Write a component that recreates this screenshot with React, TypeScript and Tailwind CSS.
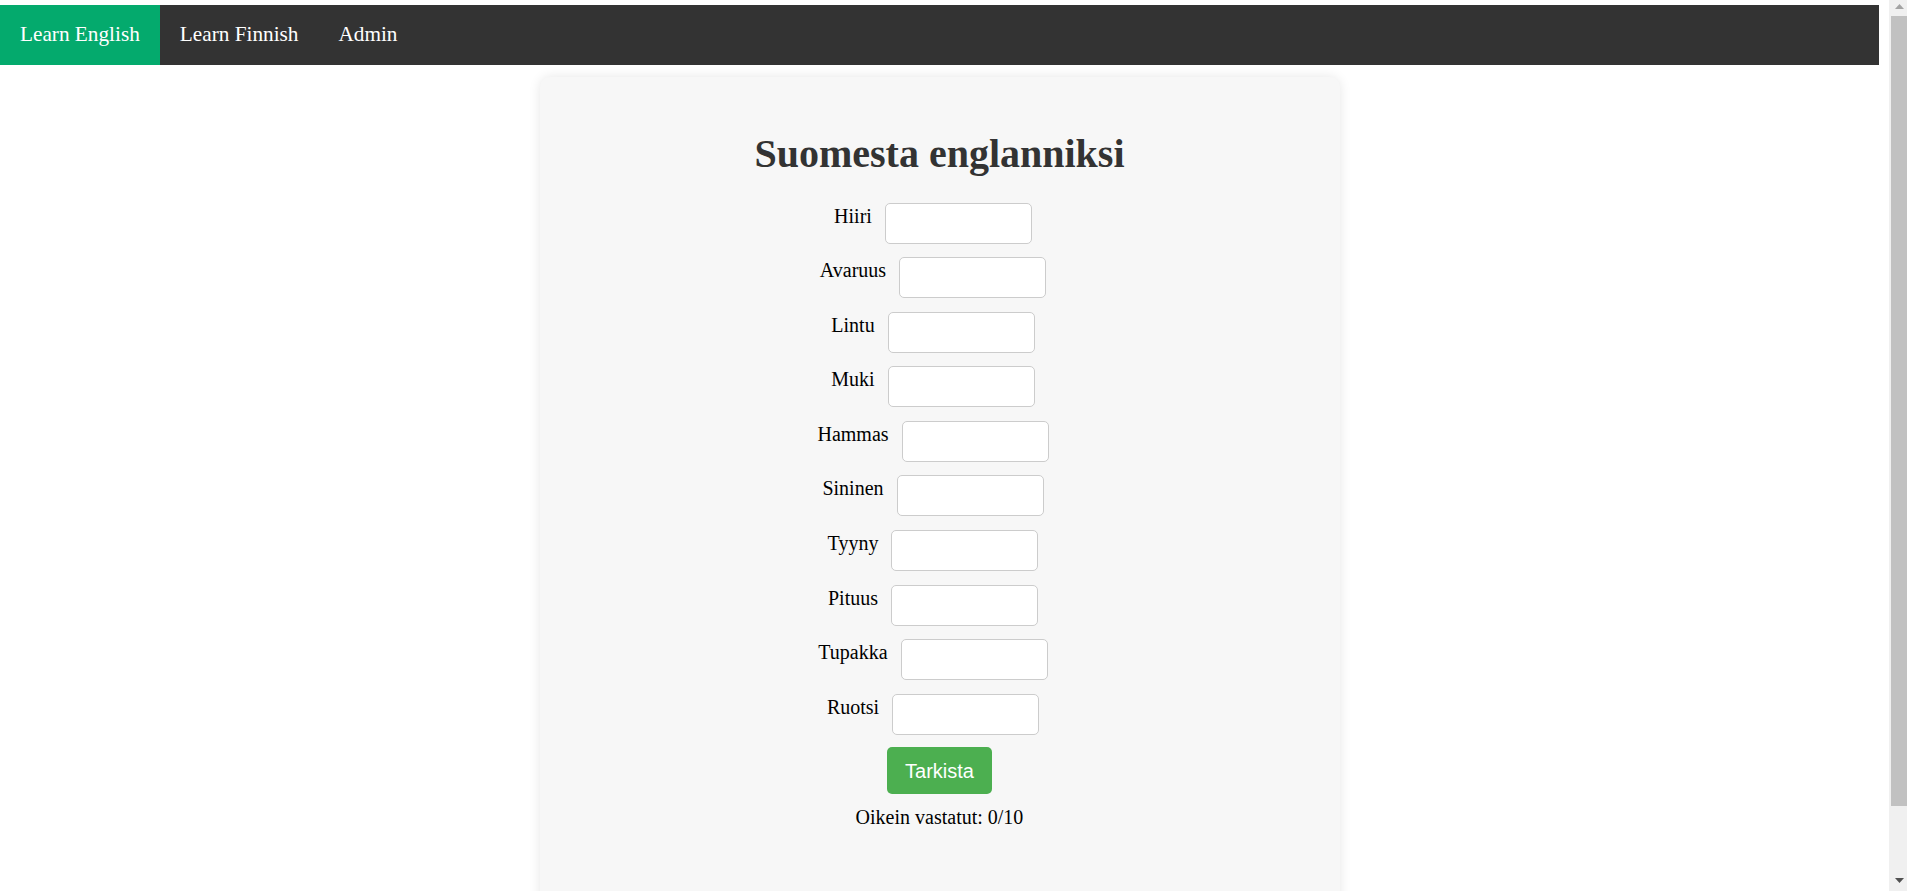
import React from "react";

const words = ["Hiiri", "Avaruus", "Lintu", "Muki", "Hammas", "Sininen", "Tyyny", "Pituus", "Tupakka", "Ruotsi"];

function ScrollBar() {
  return (
    <div className="flex h-[891px] w-[18px] shrink-0 flex-col bg-[#f0f0f0]">
      <div className="flex h-[16px] items-start justify-center pt-[4px] pl-[2px]">
        <svg width="9" height="5" viewBox="0 0 9 5">
          <polygon points="4.5,0 9,5 0,5" fill="#a3a3a3" />
        </svg>
      </div>
      <div className="ml-[2px] h-[790px] bg-[#c1c1c1]" />
      <div className="flex-1" />
      <div className="flex h-[17px] items-start justify-center pt-[4px] pl-[2px]">
        <svg width="9" height="5" viewBox="0 0 9 5">
          <polygon points="0,0 9,0 4.5,5" fill="#505050" />
        </svg>
      </div>
    </div>
  );
}

export default function App() {
  return (
    <div className="flex items-start bg-white">
      <div className="min-h-[968px] min-w-0 flex-1 pt-[5px] pr-[10px] font-['Liberation_Serif','Times_New_Roman',serif] text-black">
        <nav className="flex h-[60px] bg-[#333333]">
          <a className="flex items-center bg-[#04AA6D] px-[20px] text-[21.25px] text-white">Learn English</a>
          <a className="flex items-center px-[20px] text-[21.25px] text-white">Learn Finnish</a>
          <a className="flex items-center px-[20px] text-[21.25px] text-white">Admin</a>
        </nav>
        <div className="mx-auto mt-[12px] w-[800px] rounded-[10px] bg-[#f7f7f7] pt-[54px] pb-[120px] shadow-[0_0_12px_rgba(0,0,0,0.1)]">
          <h1 className="text-center text-[40px] leading-[46px] font-bold text-[#333333]">Suomesta englanniksi</h1>
          <div className="mt-[25.5px] flex flex-col items-center">
            {words.map((w) => (
              <div key={w} className="mb-[13.6px] flex items-start">
                <label className="mr-[13px] text-[20px] leading-[27px]">{w}</label>
                <input
                  type="text"
                  className="mr-[13px] h-[41px] w-[147px] rounded-[5px] border border-[#cccccc] bg-white px-[10px] text-[20px] outline-none"
                />
              </div>
            ))}
            <button className="mt-[-1px] rounded-[5px] bg-[#4CAF50] px-[18px] py-[12.5px] font-['Liberation_Sans',Arial,sans-serif] text-[20px] leading-[22px] text-white">
              Tarkista
            </button>
            <p className="mt-[11.5px] text-[20px] leading-[23px]">Oikein vastatut: 0/10</p>
          </div>
        </div>
      </div>
      <ScrollBar />
    </div>
  );
}
